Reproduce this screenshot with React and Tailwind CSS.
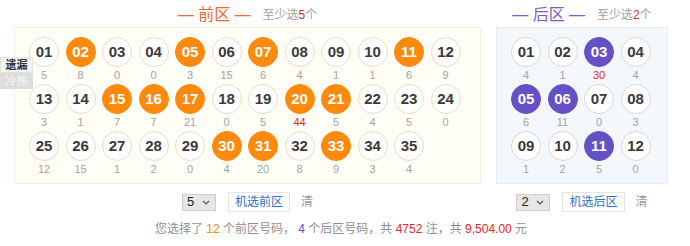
import React from "react";

const front = {
  selected: [2, 5, 7, 11, 15, 16, 17, 20, 21, 30, 31, 33],
  miss: [5, 8, 0, 0, 3, 15, 6, 4, 1, 1, 6, 9, 3, 1, 7, 7, 21, 0, 5, 44, 5, 4, 5, 0, 12, 15, 1, 2, 0, 4, 20, 8, 9, 3, 4],
  hot: [44],
};
const back = {
  selected: [3, 5, 6, 11],
  miss: [4, 1, 30, 4, 6, 11, 0, 3, 1, 2, 5, 0],
  hot: [30],
};

const pad = (n) => (n < 10 ? "0" + n : "" + n);

function Ball({ n, miss, selected, hot, kind }) {
  const sel =
    kind === "front"
      ? "bg-[#fd8a0c] border-[#fd8a0c] text-white"
      : "bg-[#6550c6] border-[#6550c6] text-white";
  const unsel =
    kind === "front"
      ? "bg-white border-[#e3dec4] text-[#3a3a3a]"
      : "bg-white border-[#d8d8d8] text-[#3a3a3a]";
  return (
    <div className="flex flex-col items-center w-[30px] h-[47px]">
      <div
        className={
          "w-[30px] h-[30px] rounded-full border flex items-center justify-center text-[15px] font-bold " +
          (selected ? sel : unsel)
        }
      >
        {pad(n)}
      </div>
      <div
        className={
          "h-[17px] leading-[17px] text-[11px] " +
          (hot ? "text-[#e8262c]" : "text-[#a3a3a3]")
        }
      >
        {miss}
      </div>
    </div>
  );
}

function Chevron() {
  return (
    <svg width="8" height="5" viewBox="0 0 8 5" fill="none">
      <path d="M1 1l3 3 3-3" stroke="#555" strokeWidth="1.2" />
    </svg>
  );
}

function Controls({ value, label }) {
  return (
    <div className="flex items-center h-[20px] gap-[11px]">
      <div className="w-[34px] h-[17px] bg-[#e6e6e6] border border-[#cfcfcf] flex items-center justify-between pl-[4px] pr-[5px] text-[13px] text-[#222]">
        <span>{value}</span>
        <Chevron />
      </div>
      <div className="ml-[1px] h-[20px] px-[6px] border border-[#e4e4e4] bg-white flex items-center text-[12px] text-[#3370c4]">
        {label}
      </div>
      <div className="text-[12px] text-[#9a9a9a]">清</div>
    </div>
  );
}

export default function App() {
  return (
    <div
      className="w-[690px] h-[246px] bg-white relative"
      style={{ fontFamily: '"Liberation Sans", "Noto Sans CJK SC", sans-serif' }}
    >
      <div className="flex pl-[14px] gap-[15px]">
        {/* Front */}
        <div className="w-[467px] flex flex-col">
          <div className="h-[27px] flex items-center justify-center gap-[12px] pt-[2px]">
            <span className="text-[16px] text-[#ef6a33]">— 前区 —</span>
            <span className="text-[12px] text-[#a0a0a0]">
              至少选<span className="text-[#e8262c]">5</span>个
            </span>
          </div>
          <div className="h-[157px] bg-[#fffef6] border border-[#f4f0de] pl-[14px] pt-[9px]">
            <div className="grid grid-cols-[repeat(12,30px)] gap-x-[6.5px]">
              {Array.from({ length: 35 }, (_, i) => i + 1).map((n, i) => (
                <Ball
                  key={n}
                  n={n}
                  kind="front"
                  miss={front.miss[i]}
                  selected={front.selected.includes(n)}
                  hot={front.hot.includes(front.miss[i]) && n === 20}
                />
              ))}
            </div>
          </div>
        </div>
        {/* Back */}
        <div className="w-[172px] flex flex-col">
          <div className="h-[27px] flex items-center justify-center gap-[12px] pt-[2px]">
            <span className="text-[16px] text-[#7462c6]">— 后区 —</span>
            <span className="text-[12px] text-[#a0a0a0]">
              至少选<span className="text-[#e8262c]">2</span>个
            </span>
          </div>
          <div className="h-[157px] bg-[#f4f8fd] border border-[#e6edf7] pl-[14px] pt-[9px]">
            <div className="grid grid-cols-[repeat(4,30px)] gap-x-[6.5px]">
              {Array.from({ length: 12 }, (_, i) => i + 1).map((n, i) => (
                <Ball
                  key={n}
                  n={n}
                  kind="back"
                  miss={back.miss[i]}
                  selected={back.selected.includes(n)}
                  hot={n === 3}
                />
              ))}
            </div>
          </div>
        </div>
      </div>

      <div className="flex pl-[14px] gap-[15px] mt-[8px]">
        <div className="w-[467px] flex justify-center">
          <Controls value="5" label="机选前区" />
        </div>
        <div className="w-[172px] flex justify-center">
          <Controls value="2" label="机选后区" />
        </div>
      </div>

      <div className="mt-[8px] flex justify-center pr-[8px] text-[12px] text-[#8f8f8f]">
        <span>
          您选择了 <span className="text-[#fd8a0c]">12</span> 个前区号码，{" "}
          <span className="text-[#6550c6]">4</span> 个后区号码，共{" "}
          <span className="text-[#e8262c]">4752</span> 注，共{" "}
          <span className="text-[#e8262c]">9,504.00</span> 元
        </span>
      </div>

      {/* side tabs */}
      <div className="absolute left-0 top-[57px] flex flex-col">
        <div className="w-[33px] h-[16px] bg-[#f2f2f2] border border-[#e2e2e2] flex items-center justify-center text-[11px] text-[#333] font-bold">
          遗漏
        </div>
        <div className="w-[33px] h-[16px] bg-[#dddddd] flex items-center justify-center text-[11px] text-[#f7f7f7]">
          冷热
        </div>
      </div>
    </div>
  );
}
